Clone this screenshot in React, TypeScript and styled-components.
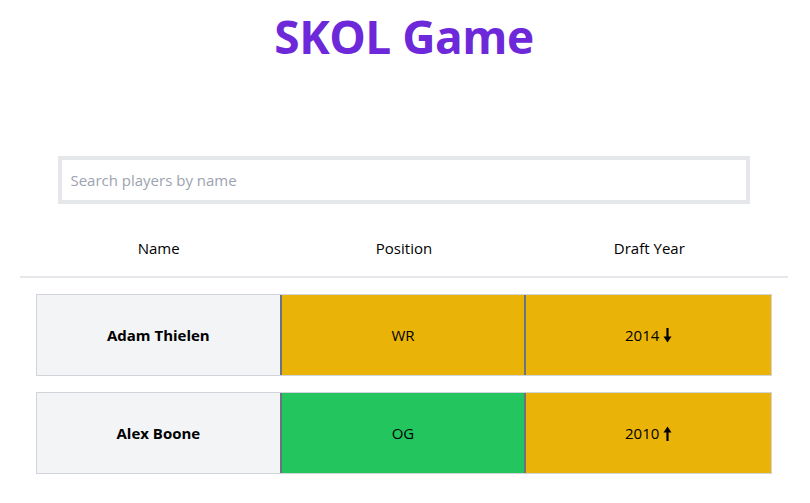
import React, { useState } from "react";
import styled, { createGlobalStyle } from "styled-components";

const GlobalStyle = createGlobalStyle`
  html, body { margin: 0; padding: 0; background: #ffffff; }
  body { font-family: "Open Sans", "Noto Sans", Arial, sans-serif; color: #000000; }
  * { box-sizing: border-box; }
`;

const Page = styled.div`
  padding: 0 22px 0 20px;
  display: flex;
  flex-direction: column;
`;

const Title = styled.h1`
  margin: 12px 0 0;
  text-align: center;
  font-size: 46px;
  line-height: 48px;
  font-weight: 700;
  color: #6d28d9;
  letter-spacing: -0.5px;
`;

const SearchInput = styled.input`
  display: block;
  width: 90%;
  height: 48px;
  margin: 96px auto 0;
  border: 4px solid #e5e7eb;
  padding: 0 8px;
  font-family: inherit;
  font-size: 15px;
  color: #111827;
  outline: none;
  &::placeholder { color: #9ca3af; }
`;

const HeaderRow = styled.div`
  display: grid;
  grid-template-columns: 1fr 1fr 1fr;
  margin-top: 16px;
  padding: 0 16px;
  border-bottom: 2px solid #e5e7eb;
`;

const HeaderCell = styled.div`
  text-align: center;
  padding: 16px 0;
  font-size: 15px;
  line-height: 24px;
`;

const Rows = styled.div`
  display: flex;
  flex-direction: column;
  gap: 16px;
  padding: 16px 16px;
`;

const Row = styled.div`
  display: grid;
  grid-template-columns: 1fr 1fr 1fr;
  border: 1px solid #d1d5db;
`;

const Cell = styled.div<{ $bg: string; $divider?: boolean; $bold?: boolean }>`
  display: flex;
  align-items: center;
  justify-content: center;
  gap: 4px;
  height: 80px;
  background: ${(p) => p.$bg};
  border-right: ${(p) => (p.$divider ? "2px solid #6b7280" : "none")};
  font-size: 15px;
  font-weight: ${(p) => (p.$bold ? 700 : 400)};
`;

const Arrow = ({ dir }: { dir: "up" | "down" }) => (
  <svg width="9" height="15" viewBox="0 0 9 15" style={{ transform: dir === "up" ? "rotate(180deg)" : undefined }}>
    <rect x="3.4" y="0" width="2.2" height="10" fill="#000" />
    <polygon points="0.5,8.5 8.5,8.5 4.5,14.5" fill="#000" />
  </svg>
);

const COLORS = { yellow: "#eab308", green: "#22c55e", gray: "#f3f4f6" };

const players = [
  { name: "Adam Thielen", pos: "WR", posColor: COLORS.yellow, year: 2014, yearColor: COLORS.yellow, dir: "down" as const },
  { name: "Alex Boone", pos: "OG", posColor: COLORS.green, year: 2010, yearColor: COLORS.yellow, dir: "up" as const },
];

export default function App() {
  const [q, setQ] = useState("");
  const shown = players.filter((p) => p.name.toLowerCase().includes(q.toLowerCase()));
  return (
    <>
      <GlobalStyle />
      <Page>
        <Title>SKOL Game</Title>
        <SearchInput placeholder="Search players by name" value={q} onChange={(e) => setQ(e.target.value)} />
        <HeaderRow>
          <HeaderCell>Name</HeaderCell>
          <HeaderCell>Position</HeaderCell>
          <HeaderCell>Draft Year</HeaderCell>
        </HeaderRow>
        <Rows>
          {shown.map((p) => (
            <Row key={p.name}>
              <Cell $bg={COLORS.gray} $bold $divider>{p.name}</Cell>
              <Cell $bg={p.posColor} $divider>{p.pos}</Cell>
              <Cell $bg={p.yearColor}>
                {p.year}
                <Arrow dir={p.dir} />
              </Cell>
            </Row>
          ))}
        </Rows>
      </Page>
    </>
  );
}
